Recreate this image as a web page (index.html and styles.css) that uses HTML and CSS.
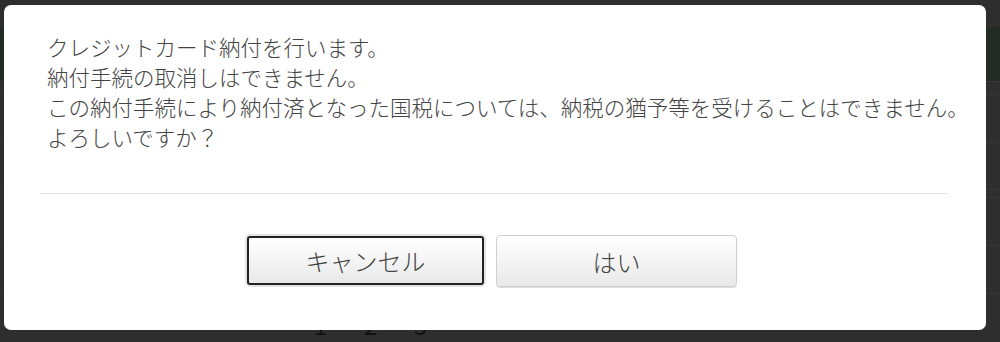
FILE: index.html
```html
<!DOCTYPE html>
<html lang="ja">
  <head>
    <meta charset="UTF-8" />
    <meta name="viewport" content="width=device-width, initial-scale=1.0" />
    <title>クレジットカード納付</title>
    <link rel="stylesheet" href="styles.css">
  </head>
  <body>
    <!-- 背面のページ（オーバーレイで暗くなっている） -->
    <div class="page">
      <div class="page-top"></div>
      <div class="page-header"></div>
      <div class="page-row h13"></div>
      <div class="page-row h50"></div>
      <div class="page-row h49"></div>
      <div class="page-row h8"></div>
      <div class="page-row h50"></div>
      <div class="page-row h50"></div>
      <div class="pager">
        <span>1</span>
        <span>2</span>
        <span>3</span>
      </div>
    </div>

    <!-- 確認ダイアログ -->
    <div class="dialog">
      <div class="message">
        <p>クレジットカード納付を行います。</p>
        <p>納付手続の取消しはできません。</p>
        <p>この納付手続により納付済となった国税については、納税の猶予等を受けることはできません。</p>
        <p>よろしいですか？</p>
      </div>
      <div class="divider"></div>
      <div class="button-box">
        <button class="btn focused">キャンセル</button>
        <button class="btn">はい</button>
      </div>
    </div>
  </body>
</html>
```

FILE: styles.css
```css
body {
  margin: 0;
  padding: 0;
  overflow: hidden;
  background-color: #2e2e2e;
  font-family: "Noto Sans CJK JP", "Noto Sans", sans-serif;
}

.page {
  display: flex;
  flex-direction: column;
  height: 342px;
}

.page-top {
  height: 28px;
}

.page-header {
  height: 56px;
  background-color: #242a24;
  border-bottom: 1px solid #383838;
}

.page-row {
  border-bottom: 1px solid #363636;
}

.h13 { height: 13px; }
.h50 { height: 49px; }
.h49 { height: 48px; }
.h8 { height: 7px; }

.pager {
  display: flex;
  justify-content: center;
  gap: 30px;
  padding: 13px 0 0 0;
  margin-left: -259px;
  font-size: 24px;
  color: #111;
}

.pager span {
  width: 20px;
  text-align: center;
}

.dialog {
  position: fixed;
  left: 4px;
  top: 5px;
  width: 982px;
  height: 325px;
  box-sizing: border-box;
  padding-top: 27px;
  background-color: #fff;
  border-radius: 7px;
  display: flex;
  flex-direction: column;
}

.message {
  padding-left: 43px;
  color: #444;
  font-size: 21.5px;
  font-weight: 300;
  line-height: 30px;
}

.message p {
  margin: 0;
  white-space: nowrap;
}

.divider {
  height: 1px;
  margin: 41px 38px 0 36px;
  background-color: #e4e4e4;
}

.button-box {
  display: flex;
  justify-content: center;
  gap: 12px;
  margin-top: 41px;
  padding-right: 6px;
}

.btn {
  width: 241px;
  height: 52px;
  border: 1px solid #cfcfcf;
  border-radius: 4px;
  background: linear-gradient(#ffffff, #e9e9e9);
  box-shadow: 0 1px 1px rgba(0, 0, 0, 0.15);
  color: #444;
  font-family: "Noto Sans CJK JP", "Noto Sans", sans-serif;
  font-size: 24px;
  font-weight: 300;
  padding: 0;
  cursor: pointer;
}

.btn.focused {
  border: 2px solid #222;
  border-radius: 3px;
  box-shadow: 0 0 0 2px #e4e4e4;
  width: 237px;
  height: 49px;
  margin-top: 1px;
}
```
